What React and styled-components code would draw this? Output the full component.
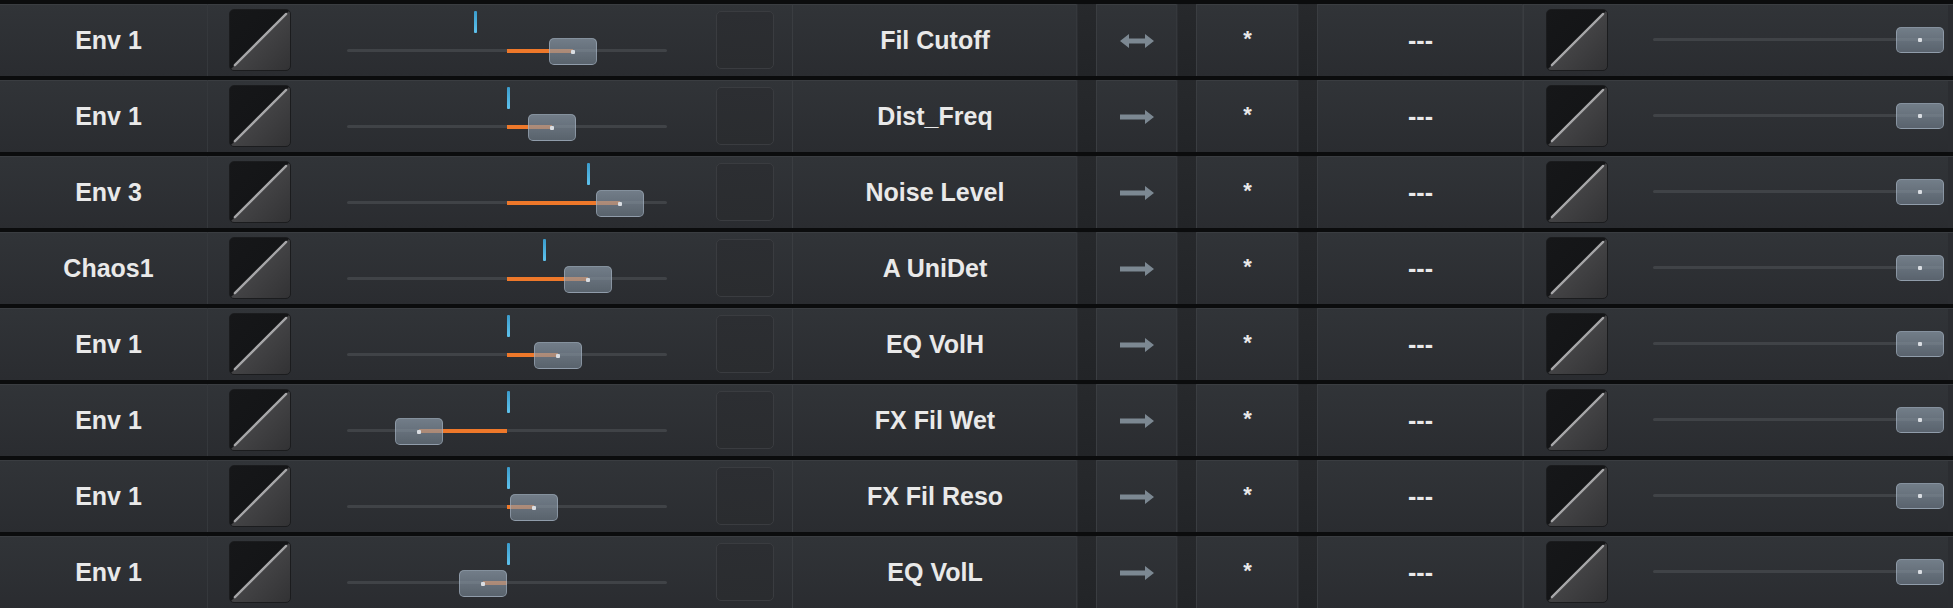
import React from 'react';
import styled, { createGlobalStyle } from 'styled-components';

const rows = [
  { source: 'Env 1', target: 'Fil Cutoff', value: 0.706, mark: 0.4, both: true },
  { source: 'Env 1', target: 'Dist_Freq', value: 0.641, mark: 0.503 },
  { source: 'Env 3', target: 'Noise Level', value: 0.853, mark: 0.753 },
  { source: 'Chaos1', target: 'A UniDet', value: 0.753, mark: 0.616 },
  { source: 'Env 1', target: 'EQ VolH', value: 0.659, mark: 0.503 },
  { source: 'Env 1', target: 'FX Fil Wet', value: 0.225, mark: 0.503 },
  { source: 'Env 1', target: 'FX Fil Reso', value: 0.584, mark: 0.503 },
  { source: 'Env 1', target: 'EQ VolL', value: 0.425, mark: 0.503 },
];

const GlobalStyle = createGlobalStyle`
  html, body {
    margin: 0;
    padding: 0;
    background: #0b0c0d;
    font-family: "Liberation Sans", Arial, sans-serif;
  }
`;

const Curve = () => (
  <CurveBox>
    <svg width="100%" height="100%" viewBox="0 0 62 62">
      <line x1="5" y1="57" x2="58" y2="4" stroke="#a6a6a8" strokeWidth="2.4" strokeLinecap="round" />
    </svg>
  </CurveBox>
);

const Arrow = ({ both }) => (
  <svg width="34" height="16" viewBox="0 0 34 16">
    {both ? (
      <path d="M0 8 L9 1 L9 5.5 L25 5.5 L25 1 L34 8 L25 15 L25 10.5 L9 10.5 L9 15 Z" fill="#7c8892" />
    ) : (
      <path d="M0 5.5 L25 5.5 L25 1 L34 8 L25 15 L25 10.5 L0 10.5 Z" fill="#7c8892" />
    )}
  </svg>
);

const ModSlider = ({ value, mark }) => {
  const from = Math.min(value, 0.5);
  const to = Math.max(value, 0.5);
  return (
    <SliderArea>
      <Track />
      <Tick style={{ left: `${mark * 100}%` }} />
      <Fill style={{ left: `${from * 100}%`, width: `${(to - from) * 100}%` }} />
      <Thumb style={{ left: `calc(${value * 100}% - 24px)` }}>
        <Dot />
      </Thumb>
    </SliderArea>
  );
};

const App = () => (
  <>
    <GlobalStyle />
    <Table>
      {rows.map((r, i) => (
        <Row key={i}>
          <SourceCell>{r.source}</SourceCell>
          <ModCell>
            <Curve />
            <ModSlider value={r.value} mark={r.mark} />
            <EmptyBox />
          </ModCell>
          <Cell>{r.target}</Cell>
          <Gap />
          <Cell>
            <Arrow both={r.both} />
          </Cell>
          <Gap />
          <Cell $small>*</Cell>
          <Gap />
          <Cell>---</Cell>
          <AmountCell>
            <Curve />
            <AmountSlider>
              <AmountTrack />
              <AmountThumb>
                <Dot />
              </AmountThumb>
            </AmountSlider>
          </AmountCell>
        </Row>
      ))}
    </Table>
  </>
);

export default App;

const Table = styled.div`
  display: flex;
  flex-direction: column;
  gap: 4px;
  padding-top: 4px;
  width: 1953px;
  height: 608px;
  box-sizing: border-box;
  background: #0b0c0d;
  overflow: hidden;
`;

const Row = styled.div`
  display: grid;
  grid-template-columns: 208px 585px 284px 20px 80px 20px 101px 20px 205px 430px;
  height: 72px;
`;

const Cell = styled.div`
  display: flex;
  align-items: center;
  justify-content: center;
  background: linear-gradient(#313438, #2a2c30);
  box-shadow: inset -1px 0 0 #35383c, inset 0 1px 0 #3a3d41;
  color: #e9e9e9;
  font-size: ${({ $small }) => ($small ? '22px' : '25px')};
  font-weight: 700;
  padding-top: ${({ $small }) => ($small ? '0' : '1px')};
  padding-bottom: ${({ $small }) => ($small ? '3px' : '0')};
  white-space: nowrap;
`;

const SourceCell = styled(Cell)`
  padding-left: 9px;
`;

const Gap = styled.div`
  background: linear-gradient(#27292c, #222427);
  box-shadow: inset -1px 0 0 #3a3d41, inset 1px 0 0 #2c2e32;
`;

const ModCell = styled.div`
  display: flex;
  align-items: center;
  padding-left: 21px;
  background: linear-gradient(#313438, #2a2c30);
  box-shadow: inset -1px 0 0 #3a3d41, inset 0 1px 0 #3a3d41;
`;

const AmountCell = styled(ModCell)`
  padding-left: 23px;
  box-shadow: inset 1px 0 0 #3a3d41, inset 0 1px 0 #3a3d41, inset -5px 0 0 #2b2d31;
`;

const CurveBox = styled.div`
  width: 62px;
  height: 62px;
  flex: none;
  border-radius: 5px;
  overflow: hidden;
  border: 1px solid #1b1c1e;
  box-sizing: border-box;
  background: linear-gradient(to top left, #323234 0%, #434345 49.4%, #141517 50.6%, #161719 100%);
  svg {
    display: block;
  }
`;

const SliderArea = styled.div`
  position: relative;
  flex: none;
  width: 320px;
  height: 100%;
  margin-left: 56px;
`;

const Track = styled.div`
  position: absolute;
  left: 0;
  right: 0;
  top: 45px;
  height: 3px;
  border-radius: 2px;
  background: #404347;
`;

const Tick = styled.div`
  position: absolute;
  top: 7px;
  width: 3px;
  margin-left: -1px;
  height: 22px;
  border-radius: 1px;
  background: linear-gradient(#3a9ccc, #5fc3ee);
`;

const Fill = styled.div`
  position: absolute;
  top: 45px;
  height: 4px;
  background: #ee782a;
`;

const Thumb = styled.div`
  position: absolute;
  top: 34px;
  width: 48px;
  height: 27px;
  box-sizing: border-box;
  border-radius: 5px;
  border: 1px solid rgba(175, 190, 205, 0.5);
  background: linear-gradient(rgba(150, 165, 180, 0.66), rgba(118, 132, 146, 0.62));
  display: flex;
  align-items: center;
  justify-content: center;
`;

const Dot = styled.div`
  width: 4px;
  height: 4px;
  border-radius: 1px;
  background: #d9dde2;
`;

const EmptyBox = styled.div`
  flex: none;
  width: 58px;
  height: 58px;
  margin-left: 49px;
  box-sizing: border-box;
  border-radius: 5px;
  border: 1px solid #3a3c40;
  background: linear-gradient(#2c2e32, #2a2c2f);
`;

const AmountSlider = styled.div`
  position: relative;
  flex: none;
  width: 291px;
  height: 100%;
  margin-left: 45px;
`;

const AmountTrack = styled(Track)`
  top: 34px;
  right: 1px;
`;

const AmountThumb = styled(Thumb)`
  top: 23px;
  right: 0;
  height: 26px;
`;
